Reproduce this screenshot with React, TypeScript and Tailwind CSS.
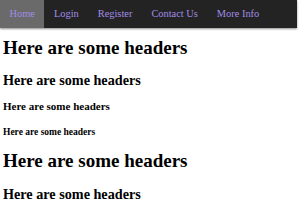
import React from "react";

const links = ["Home", "Login", "Register", "Contact Us", "More Info"];

export default function App() {
  return (
    <div className="min-h-[210px] bg-white font-['Liberation_Serif',serif] text-black">
      <nav className="mr-[3px] flex h-[28px] items-stretch bg-[#232323] shadow-[0_1px_2px_rgba(0,0,0,0.45)]">
        {links.map((l, i) => (
          <a
            key={l}
            className={`flex items-center px-[9.5px] text-[10.4px] text-[#a08ce6] ${i === 0 ? "bg-[#6a6a6a]" : ""}`}
          >
            {l}
          </a>
        ))}
      </nav>
      <div className="px-[3px]">
        <h1 className="mt-[9px] text-[19px] font-bold leading-[22px]">Here are some headers</h1>
        <h2 className="mt-[12.5px] text-[14.2px] font-bold leading-[16px]">Here are some headers</h2>
        <h3 className="mt-[12.5px] text-[11px] font-bold leading-[13px]">Here are some headers</h3>
        <h4 className="mt-[13.5px] text-[9.5px] font-bold leading-[11px]">Here are some headers</h4>
        <h1 className="mt-[12.5px] text-[19px] font-bold leading-[22px]">Here are some headers</h1>
        <h2 className="mt-[13.5px] text-[14.2px] font-bold leading-[16px]">Here are some headers</h2>
      </div>
    </div>
  );
}
